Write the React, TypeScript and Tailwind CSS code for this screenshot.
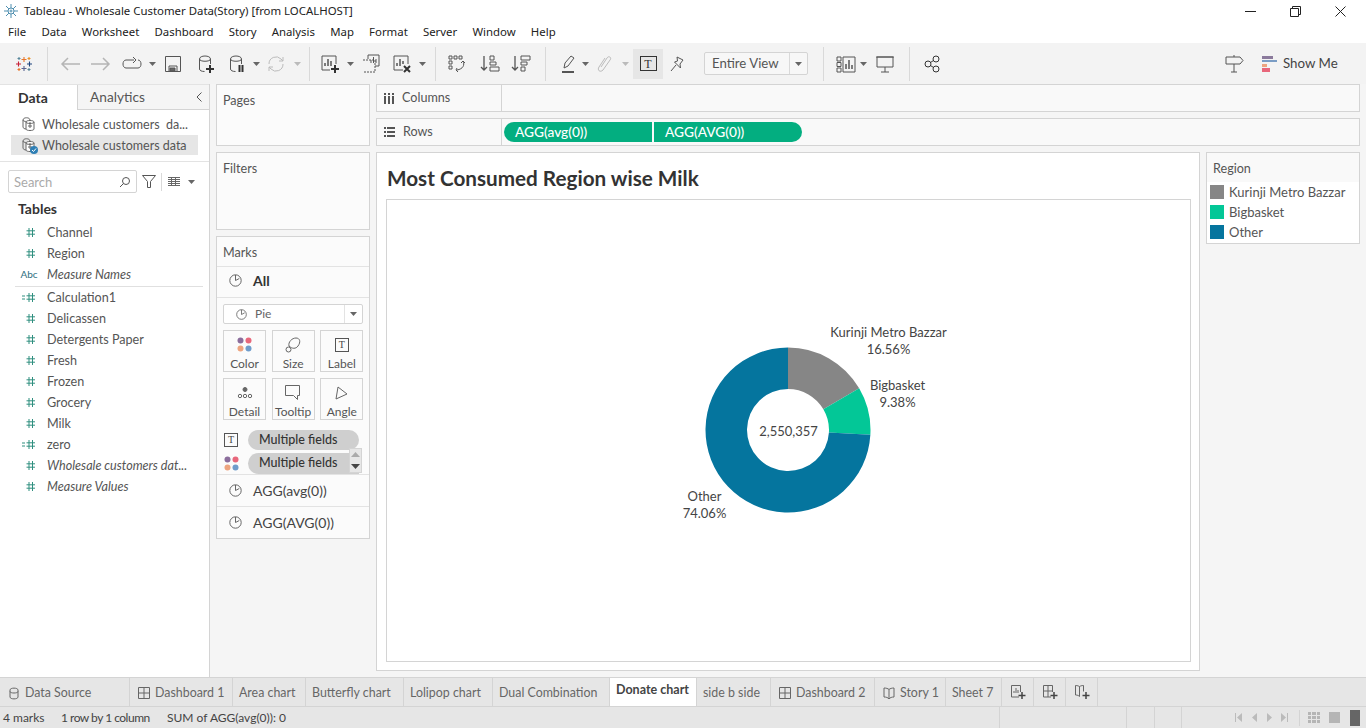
import React from "react";

const TAB = '"Lato", "Open Sans", sans-serif';
const WIN = '"Noto Sans", "Open Sans", sans-serif';

const sheetTabs = [
  { name: "Data Source", w: "w-[130px]", icon: "db" },
  { name: "Dashboard 1", w: "w-[103px]", icon: "dash" },
  { name: "Area chart", w: "w-[73px]" },
  { name: "Butterfly chart", w: "w-[98px]" },
  { name: "Lolipop chart", w: "w-[89px]" },
  { name: "Dual Combination", w: "w-[117px]" },
  { name: "Donate chart", w: "w-[87px]", active: true },
  { name: "side b side", w: "w-[74px]" },
  { name: "Dashboard 2", w: "w-[104px]", icon: "dash" },
  { name: "Story 1", w: "w-[71px]", icon: "story" },
  { name: "Sheet 7", w: "w-[56px]" },
];

const fieldsTop = [
  { name: "Channel" },
  { name: "Region" },
  { name: "Measure Names", abc: true },
];

const fieldsBottom = [
  { name: "Calculation1", calc: true },
  { name: "Delicassen" },
  { name: "Detergents Paper" },
  { name: "Fresh" },
  { name: "Frozen" },
  { name: "Grocery" },
  { name: "Milk" },
  { name: "zero", calc: true },
  { name: "Wholesale customers dat...", italic: true },
  { name: "Measure Values", italic: true },
];

function Caret({ className = "", color = "#666" }: { className?: string; color?: string }) {
  return (
    <div className={`flex items-center justify-center shrink-0 ${className}`}>
      <svg width="7" height="4" viewBox="0 0 7 4">
        <path d="M0 0h7L3.5 4z" fill={color} />
      </svg>
    </div>
  );
}

function Slot({ className = "", children }: { className?: string; children?: React.ReactNode }) {
  return <div className={`flex items-center justify-center shrink-0 h-full ${className}`}>{children}</div>;
}

function Sep() {
  return <div className="w-px h-[34px] bg-[#d9d9d9] shrink-0" />;
}

function Ico({ children, w = 20, h = 20, stroke = "#555" }: { children: React.ReactNode; w?: number; h?: number; stroke?: string }) {
  return (
    <svg width={w} height={h} viewBox={`0 0 ${w} ${h}`} fill="none" stroke={stroke} strokeWidth="1">
      {children}
    </svg>
  );
}

function Plus({ x, y }: { x: number; y: number }) {
  return <path d={`M${x - 4} ${y}h8M${x} ${y - 4}v8`} stroke="#333" strokeWidth="2" />;
}

function Cyl() {
  return <path d="M3.5 5c0-4 11-4 11 0v5M3.5 5c0 3 11 3 11 0M3.5 5v10c0 1.5 2 2.5 5 2.5" />;
}

function Logo({ size = 18 }: { size?: number }) {
  const bars = [
    ["M9 2v5M6.5 4.5h5", "#e8762b"],
    ["M9 11v5M6.5 13.5h5", "#5b6591"],
    ["M3.5 6.5v5M1 9h5", "#c72037"],
    ["M14.5 6.5v5M12 9h5", "#1f457e"],
    ["M4 2v3M2.5 3.5h3", "#59879b"],
    ["M14 2v3M12.5 3.5h3", "#eb9129"],
    ["M4 13v3M2.5 14.5h3", "#e8762b"],
    ["M14 13v3M12.5 14.5h3", "#5b879b"],
  ];
  return (
    <svg width={size} height={size} viewBox="0 0 18 18" fill="none" strokeWidth="1.1">
      {bars.map(([d, c]) => (
        <path key={d} d={d} stroke={c} />
      ))}
    </svg>
  );
}

function WinLogo() {
  const arms = ["M8 1v14", "M1 8h14", "M3 3l10 10", "M13 3L3 13"];
  return (
    <svg width="16" height="16" viewBox="0 0 16 16" fill="none" stroke="#4f8fb0" strokeWidth="1">
      {arms.map((d) => (
        <path key={d} d={d} />
      ))}
      <circle cx="8" cy="8" r="3" fill="#fff" />
      <path d="M8 6.500v3M6.500 8h3" />
    </svg>
  );
}

function PieIcon({ size = 13 }: { size?: number }) {
  return (
    <svg width={size} height={size} viewBox="0 0 13 13" fill="none" stroke="#666">
      <circle cx="6.5" cy="6.5" r="5.7" />
      <path d="M6.5 1v5.5l3.8-2" />
    </svg>
  );
}

function Dots() {
  return (
    <svg width="15" height="15" viewBox="0 0 15 15">
      <circle cx="3.5" cy="3.5" r="3" fill="#8b6d9c" />
      <circle cx="11.5" cy="3.5" r="3" fill="#e8677b" />
      <circle cx="3.5" cy="11.5" r="3" fill="#eda47f" />
      <circle cx="11.5" cy="11.5" r="3" fill="#6f9ccb" />
    </svg>
  );
}

function TBox({ size = 14 }: { size?: number }) {
  return (
    <div
      className="flex items-center justify-center border border-[#555] text-[10px] leading-none text-[#444]"
      style={{ width: size, height: size, fontFamily: '"Liberation Serif", serif' }}
    >
      T
    </div>
  );
}

function FieldIcon({ calc, abc }: { calc?: boolean; abc?: boolean }) {
  if (abc) return <span className="text-[10px] text-[#2f6f7f]">Abc</span>;
  return (
    <svg width="16" height="11" viewBox="0 0 16 11" fill="none" stroke="#2f8f7f">
      {calc && <path d="M1 4h3M1 7h3" />}
      <path d="M8 1v9M11.5 1v9M5.5 3.8h8.5M5.5 7.2h8.5" />
    </svg>
  );
}

function Field({ name, calc, abc, italic }: { name: string; calc?: boolean; abc?: boolean; italic?: boolean }) {
  return (
    <div className="flex items-center h-[21px] shrink-0">
      <div className="w-[47px] pl-[17px] pr-[6px] flex justify-center shrink-0">
        <FieldIcon calc={calc} abc={abc} />
      </div>
      <span className={`translate-y-px text-[12.6px] text-[#555] whitespace-nowrap ${abc || italic ? "italic" : ""}`}>{name}</span>
    </div>
  );
}

function DsIcon({ check }: { check?: boolean }) {
  return (
    <svg width="18" height="18" viewBox="0 0 18 18" fill="none" stroke="#666">
      <path d="M3 5c0-3 7-3 7 0v3M3 5c0 2 7 2 7 0M3 5v7c0 1 1.500 2 3 2" />
      <path d="M6 7c0-2 8-2 8 0v7c0 2-8 2-8 0zM6 7c0 2 8 2 8 0" fill="#fff" />
      <path d="M8 11h4M10 9v4" />
      {check && <circle cx="14" cy="14" r="4" fill="#2f7fb5" stroke="none" />}
      {check && <path d="M12 14l1.500 1.500 2.500-3" stroke="#fff" />}
    </svg>
  );
}

function MarkBtn({ label, children }: { label: string; children: React.ReactNode }) {
  return (
    <div className="flex flex-col items-center justify-between w-[43px] h-[42px] border border-[#d4d4d4] pt-[5px] bg-[#fbfbfb]">
      <div className="h-[17px] flex items-center justify-center">{children}</div>
      <span className="text-[12px] leading-[15px] text-[#555] whitespace-nowrap">{label}</span>
    </div>
  );
}

function slice(start: number, end: number) {
  const c = 83;
  const R = 82.5;
  const r = 41;
  const pt = (rad: number, pct: number) => {
    const a = (pct / 100) * 2 * Math.PI;
    return `${(c + rad * Math.sin(a)).toFixed(2)} ${(c - rad * Math.cos(a)).toFixed(2)}`;
  };
  const large = end - start > 50 ? 1 : 0;
  return `M${pt(R, start)}A${R} ${R} 0 ${large} 1 ${pt(R, end)}L${pt(r, end)}A${r} ${r} 0 ${large} 0 ${pt(r, start)}Z`;
}

function Donut() {
  return (
    <div className="relative w-[166px] h-[166px] text-[13px] leading-[17px] text-[#444] text-center">
      <svg width="166" height="166" viewBox="0 0 166 166">
        <path d={slice(0, 16.56)} fill="#868686" />
        <path d={slice(16.56, 25.94)} fill="#03c797" />
        <path d={slice(25.94, 100)} fill="#05759e" />
      </svg>
      <div className="absolute inset-0 pt-[3px] pl-[2px] flex items-center justify-center">2,550,357</div>
      <div className="absolute left-[116px] top-[-23px] w-[136px]">
        Kurinji Metro Bazzar
        <br />
        16.56%
      </div>
      <div className="absolute left-[163px] top-[30px] w-[60px]">
        Bigbasket
        <br />
        9.38%
      </div>
      <div className="absolute left-[-30px] top-[141px] w-[60px]">
        Other
        <br />
        74.06%
      </div>
    </div>
  );
}

function TabIcon({ kind }: { kind: string }) {
  if (kind === "db")
    return (
      <svg width="12" height="13" viewBox="0 0 12 13" fill="none" stroke="#666">
        <path d="M2 3c0-2.500 8-2.500 8 0v7c0 2.500-8 2.500-8 0zM2 4.500c0 2 8 2 8 0" />
      </svg>
    );
  if (kind === "dash")
    return (
      <svg width="12" height="12" viewBox="0 0 12 12" fill="none" stroke="#666">
        <path d="M.5.5h11v11H.5zM.5 6h11M6 .5v11" />
      </svg>
    );
  return (
    <svg width="12" height="13" viewBox="0 0 12 13" fill="none" stroke="#666">
      <path d="M1 1c2 0 4 .5 5 1.500C7 1.500 9 1 11 1v9c-2 0-4 .5-5 2-1-1.500-3-2-5-2zM6 2.500V12" />
    </svg>
  );
}

export default function App() {
  return (
    <div className="w-[1366px] h-[728px] flex flex-col overflow-hidden bg-white" style={{ fontFamily: TAB }}>
      {/* window title */}
      <div className="h-[21px] flex items-center shrink-0 relative" style={{ fontFamily: WIN }}>
        <div className="w-[24px] pl-[3px] shrink-0">
          <WinLogo />
        </div>
        <span className="text-[11.4px] text-[#222]">Tableau - Wholesale Customer Data(Story) [from LOCALHOST]</span>
        <div className="ml-auto flex items-center gap-[34px] pr-[20px] pt-[2px]">
          <svg width="11" height="11" viewBox="0 0 11 11" stroke="#222" fill="none">
            <path d="M0 5.500h11" />
          </svg>
          <svg width="11" height="11" viewBox="0 0 11 11" stroke="#222" fill="none">
            <path d="M.5 2.500h8v8h-8zM2.500 2.500v-2h8v8h-2" />
          </svg>
          <svg width="11" height="11" viewBox="0 0 11 11" stroke="#222" fill="none">
            <path d="M.5.5l10 10M10.500.5l-10 10" />
          </svg>
        </div>
      </div>

      {/* menu */}
      <div className="h-[22px] flex items-center gap-[15.2px] pl-[8px] text-[11.4px] text-[#222] shrink-0" style={{ fontFamily: WIN }}>
        {["File", "Data", "Worksheet", "Dashboard", "Story", "Analysis", "Map", "Format", "Server", "Window", "Help"].map((m) => (
          <span key={m}>{m}</span>
        ))}
      </div>

      {/* toolbar */}
      <div className="h-[41px] flex items-center bg-[#f3f3f3] shrink-0">
        <Slot className="w-[47px]">
          <Logo />
        </Slot>
        <Sep />
        <Slot className="w-[32px] ml-[6px]">
          <Ico w={20} h={14} stroke="#b5b5b5">
            <path d="M20 7H2M8 1L2 7l6 6" strokeWidth="1.500" />
          </Ico>
        </Slot>
        <Slot className="w-[30px]">
          <Ico w={20} h={14} stroke="#b5b5b5">
            <path d="M0 7h18M12 1l6 6-6 6" strokeWidth="1.500" />
          </Ico>
        </Slot>
        <Slot className="w-[32px]">
          <Ico w={20} h={14}>
            <path d="M12 3H4C0 3 0 11 4 11h12c4 0 4-8 0-8" />
            <path d="M11 0l3 3-3 3" />
          </Ico>
        </Slot>
        <Caret className="w-[8px]" />
        <Slot className="w-[34px]">
          <Ico w={16} h={16}>
            <path d="M.5.5h15v15H.5zM4 15.500V10h8v5.500" />
            <path d="M5 12h5v3H5z" fill="#666" />
          </Ico>
        </Slot>
        <Slot className="w-[32px]">
          <Ico>
            <Cyl />
            <Plus x={14} y={15} />
          </Ico>
        </Slot>
        <Slot className="w-[30px]">
          <Ico>
            <Cyl />
            <path d="M12.500 11v7M15.500 11v7" stroke="#333" strokeWidth="2" />
          </Ico>
        </Slot>
        <Caret className="w-[8px]" />
        <Slot className="w-[32px]">
          <Ico w={18} h={16} stroke="#bbb">
            <path d="M2 8a7 7 0 0 1 12-5l2 2M16 8a7 7 0 0 1-12 5l-2-2M16 1v4h-4M2 15v-4h4" />
          </Ico>
        </Slot>
        <Caret className="w-[10px] mr-[7px]" color="#bbb" />
        <Sep />
        <Slot className="w-[32px] ml-[4px]">
          <Ico>
            <path d="M10 16H2V2h14v8" />
            <path d="M5 12V9M8 12V5M11 12V7" strokeWidth="1.500" />
            <Plus x={15} y={15} />
          </Ico>
        </Slot>
        <Caret className="w-[8px]" />
        <Slot className="w-[34px]">
          <Ico>
            <path d="M7 5V1h11v11h-4" />
            <path d="M2 6h12v12H2" strokeDasharray="2 1" />
            <path d="M10 9V6M12.500 9V3M15 9V5" />
          </Ico>
        </Slot>
        <Slot className="w-[28px]">
          <Ico>
            <path d="M11 16H2V2h14v8" />
            <path d="M5 12V9M8 12V5M11 10V7" strokeWidth="1.500" />
            <path d="M12 12l6 6M18 12l-6 6" stroke="#333" strokeWidth="2" />
          </Ico>
        </Slot>
        <Caret className="w-[12px] mr-[7px]" />
        <Sep />
        <Slot className="w-[42px]">
          <Ico>
            <path d="M2 2h3v3H2zM7 2h3v3H7zM12 2h3v3h-3zM2 7h3v3H2zM2 12h3v3H2z" />
            <path d="M16 7c2 4 0 8-6 9M10 14l-1 2 2 2M14 9l2-2 2 2" />
          </Ico>
        </Slot>
        <Slot className="w-[24px]">
          <Ico>
            <path d="M4 2v14M1 13l3 3 3-3" strokeWidth="1.300" />
            <path d="M10 2h4v4h-4zM10 8h6v3h-6zM10 13h9v4h-9z" />
          </Ico>
        </Slot>
        <Slot className="w-[38px]">
          <Ico>
            <path d="M4 2v14M1 13l3 3 3-3" strokeWidth="1.300" />
            <path d="M10 2h9v4h-9zM10 8h6v3h-6zM10 13h4v4h-4z" />
          </Ico>
        </Slot>
        <div className="w-[5px] shrink-0" />
        <Sep />
        <Slot className="w-[24px] ml-[10px]">
          <Ico>
            <path d="M6 14l1-5 6-7 3 2-6 8z" />
            <path d="M4 18h12" strokeWidth="2" />
          </Ico>
        </Slot>
        <Caret className="w-[10px]" />
        <Slot className="w-[28px]">
          <Ico stroke="#bbb">
            <path d="M7 13l6-9c2-3 5 0 3 2l-7 10c-3 3-6 0-4-3l6-9" />
          </Ico>
        </Slot>
        <Caret className="w-[14px] mr-px" color="#bbb" />
        <Slot className="w-[30px] !h-[30px] bg-[#e6e6e6]">
          <div className="w-[17px] h-[15px] border border-[#333] flex items-center justify-center text-[12px] leading-none text-[#333]" style={{ fontFamily: '"Liberation Serif", serif' }}>
            T
          </div>
        </Slot>
        <Slot className="w-[28px]">
          <Ico w={16} h={16}>
            <path d="M8 1l6 3-3 4 .5 4-6-6 3-1zM7 9l-5 6" />
          </Ico>
        </Slot>
        <div className="ml-[13px] w-[104px] h-[23px] flex items-center border border-[#d4d4d4] rounded-[2px] bg-[#f7f7f7] shrink-0">
          <span className="flex-1 pl-[7px] text-[13.2px] text-[#555] whitespace-nowrap">Entire View</span>
          <div className="w-[18px] h-full border-l border-[#d9d9d9] flex items-center justify-center">
            <Caret />
          </div>
        </div>
        <div className="w-[15px] shrink-0" />
        <Sep />
        <Slot className="w-[24px] ml-[10px]">
          <Ico>
            <path d="M1 3h4v4H1zM1 8.500h4v4H1zM1 14h4v4H1zM7 3h12v15H7z" />
            <path d="M10 15v-5M13 15V6M16 15v-4" strokeWidth="1.500" />
          </Ico>
        </Slot>
        <Caret className="w-[10px]" />
        <Slot className="w-[34px]">
          <Ico>
            <path d="M2 3h16v10H2zM1 3h18M10 13v5M6 18h8" />
          </Ico>
        </Slot>
        <div className="w-[7px] shrink-0" />
        <Sep />
        <Slot className="w-[44px]">
          <Ico w={16} h={18} stroke="#333">
            <circle cx="4" cy="9" r="3" />
            <circle cx="12" cy="4" r="3" />
            <circle cx="12" cy="14" r="3" />
            <path d="M6.500 7.500l3-2M6.500 10.500l3 2" />
          </Ico>
        </Slot>
        <div className="flex-1" />
        <Slot className="w-[34px] mr-[10px]">
          <Ico>
            <path d="M1 3h14l3 3.500-3 3.500H1zM9 3V1M9 10v8M6 18h6" />
          </Ico>
        </Slot>
        <div className="w-[76px] mr-[28px] h-full flex items-center shrink-0">
          <svg width="15" height="16" viewBox="0 0 15 16" className="shrink-0">
            <path d="M0 0h11v3H0z" fill="#8b7a9c" />
            <path d="M0 4h15v2H0z" fill="#7a9cc4" />
            <path d="M0 8h5v3H0z" fill="#eda47f" />
            <path d="M0 12h8v4H0z" fill="#e8677b" />
          </svg>
          <span className="ml-[6px] text-[13.3px] text-[#444] whitespace-nowrap">Show Me</span>
        </div>
      </div>

      {/* main area */}
      <div className="h-[593px] shrink-0 flex bg-[#f5f5f5]">
        {/* data pane */}
        <div className="w-[210px] shrink-0 bg-white border-r border-[#d4d4d4] flex flex-col">
          <div className="h-[26px] flex shrink-0 border-t border-[#e3e3e3]">
            <div className="w-[77px] pl-[18px] flex items-center text-[14px] font-bold text-[#333]">Data</div>
            <div className="flex-1 flex items-center justify-between pl-[12px] pr-[7px] bg-[#f5f5f5] border-l border-b border-[#d4d4d4] text-[13.7px] text-[#555]">
              <span>Analytics</span>
              <svg width="6" height="10" viewBox="0 0 6 10" fill="none" stroke="#555">
                <path d="M5.500.5L1 5l4.500 4.500" />
              </svg>
            </div>
          </div>
          <div className="pt-[4px] pl-[11px] pr-[11px] pb-[6px] border-b border-[#e3e3e3] text-[12.5px] text-[#555] shrink-0">
            <div className="h-[20px] flex items-center pl-[9px] gap-[4px]">
              <DsIcon />
              <span className="translate-y-px whitespace-nowrap">Wholesale customers&nbsp; da...</span>
            </div>
            <div className="h-[20px] flex items-center pl-[9px] gap-[4px] bg-[#e6e6e6] mt-px">
              <DsIcon check />
              <span className="translate-y-px whitespace-nowrap">Wholesale customers data</span>
            </div>
          </div>
          <div className="flex items-center pt-[8px] pl-[8px] shrink-0">
            <div className="w-[129px] h-[23px] flex items-center justify-between px-[5px] border border-[#d4d4d4] rounded-[2px]">
              <span className="translate-y-px text-[13px] text-[#aaa]">Search</span>
              <svg width="12" height="12" viewBox="0 0 12 12" fill="none" stroke="#555">
                <circle cx="7" cy="5" r="3.500" />
                <path d="M4.500 7.500L1 11" />
              </svg>
            </div>
            <svg width="14" height="13" viewBox="0 0 14 13" fill="none" stroke="#555" className="ml-[5px]">
              <path d="M.5.5h13L8.500 6.500v6h-3v-6z" />
            </svg>
            <div className="w-px h-[18px] bg-[#d9d9d9] ml-[5px]" />
            <svg width="12" height="9" viewBox="0 0 12 9" fill="none" stroke="#666" className="ml-[6px]">
              <path d="M0 .5h12M0 2.500h12M0 4.500h12M0 6.500h12M0 8.500h12M3.500 0v9M7.500 0v9" />
            </svg>
            <Caret className="ml-[8px]" />
          </div>
          <div className="h-[29px] pl-[18px] pt-[2px] flex items-center text-[14px] font-bold text-[#333] shrink-0">Tables</div>
          {fieldsTop.map((f) => (
            <Field key={f.name} {...f} />
          ))}
          <div className="h-px bg-[#e0e0e0] mt-px ml-[15px] mr-[6px] shrink-0" />
          {fieldsBottom.map((f) => (
            <Field key={f.name} {...f} />
          ))}
        </div>

        {/* cards */}
        <div className="w-[154px] ml-[6px] shrink-0 flex flex-col gap-[6px]">
          <div className="h-[62px] bg-[#fbfbfb] border border-[#d4d4d4] pl-[6px] pt-[7px] text-[12.6px] text-[#555]">Pages</div>
          <div className="h-[78px] bg-[#fbfbfb] border border-[#d4d4d4] pl-[6px] pt-[7px] text-[12.6px] text-[#555]">Filters</div>
          <div className="h-[303px] bg-[#fbfbfb] border border-[#d4d4d4] flex flex-col">
            <div className="h-[30px] border-b border-[#e3e3e3] pl-[6px] pt-[4px] flex items-center text-[12.6px] text-[#555] shrink-0">Marks</div>
            <div className="h-[31px] border-b border-[#e3e3e3] pb-[3px] flex items-center shrink-0">
              <div className="w-[36px] flex justify-center">
                <PieIcon />
              </div>
              <span className="text-[14px] font-bold text-[#333]">All</span>
            </div>
            <div className="px-[6px] pt-[6px] shrink-0">
              <div className="h-[20px] flex items-center border border-[#d4d4d4] rounded-[2px] bg-white">
                <div className="flex-1 pl-[12px] flex items-center gap-[8px] text-[12px] text-[#666]">
                  <PieIcon size={11} />
                  Pie
                </div>
                <div className="w-[18px] h-full border-l border-[#e3e3e3] flex items-center justify-center">
                  <Caret />
                </div>
              </div>
              <div className="grid grid-cols-3 gap-x-[6px] gap-y-[6px] mt-[6px]">
                <MarkBtn label="Color">
                  <Dots />
                </MarkBtn>
                <MarkBtn label="Size">
                  <Ico w={16} h={16} stroke="#666">
                    <path d="M4 9C3 5 7 1 11 1s5 4 2 8c-2 3-6 3-9 0z" />
                    <circle cx="3.500" cy="12.500" r="2.500" fill="#fbfbfb" />
                  </Ico>
                </MarkBtn>
                <MarkBtn label="Label">
                  <TBox size={14} />
                </MarkBtn>
                <MarkBtn label="Detail">
                  <Ico w={16} h={12} stroke="#666">
                    <circle cx="8" cy="2.500" r="2" fill="#666" />
                    <circle cx="3" cy="9" r="1.700" />
                    <circle cx="8" cy="9" r="1.700" />
                    <circle cx="13" cy="9" r="1.700" />
                  </Ico>
                </MarkBtn>
                <MarkBtn label="Tooltip">
                  <Ico w={16} h={15} stroke="#666">
                    <path d="M.5.5h14v10h-2v4l-4-4H.5z" />
                  </Ico>
                </MarkBtn>
                <MarkBtn label="Angle">
                  <Ico w={14} h={14} stroke="#666">
                    <path d="M3 1l9 7-11 5z" />
                  </Ico>
                </MarkBtn>
              </div>
            </div>
            <div className="flex-1 relative pt-[10px] pl-[6px]">
              <div className="flex items-center h-[20px]">
                <div className="w-[25px] flex justify-start pl-px">
                  <TBox size={14} />
                </div>
                <div className="w-[111px] h-[20px] rounded-full bg-[#cfcfcf] pl-[11px] flex items-center text-[12.5px] text-[#333] font-medium">Multiple fields</div>
              </div>
              <div className="flex items-center h-[21px] mt-[3px]">
                <div className="w-[25px] flex justify-start pl-[1px]">
                  <Dots />
                </div>
                <div className="w-[111px] h-[21px] rounded-l-full bg-[#cfcfcf] pl-[11px] flex items-center text-[12.5px] text-[#333] font-medium">Multiple fields</div>
              </div>
              <div className="absolute left-[132px] top-[28px] w-[13px] h-[25px] bg-[#e6e6e6] border border-[#d4d4d4] flex flex-col items-center justify-between py-[3px]">
                <svg width="9" height="5" viewBox="0 0 9 5">
                  <path d="M4.500 0L9 5H0z" fill="#aaa" />
                </svg>
                <svg width="9" height="5" viewBox="0 0 9 5">
                  <path d="M0 0h9L4.500 5z" fill="#444" />
                </svg>
              </div>
            </div>
            {["AGG(avg(0))", "AGG(AVG(0))"].map((t) => (
              <div key={t} className="h-[32px] border-t border-[#e3e3e3] flex items-center shrink-0 text-[14px] text-[#444]">
                <div className="w-[36px] flex justify-center">
                  <PieIcon />
                </div>
                {t}
              </div>
            ))}
          </div>
        </div>

        {/* shelves + view */}
        <div className="w-[984px] ml-[6px] shrink-0 flex flex-col gap-[6px]">
          <div className="h-[28px] flex bg-[#f9f9f9] border border-[#d4d4d4] shrink-0">
            <div className="w-[125px] border-r border-[#d4d4d4] flex items-center pl-[7px] gap-[8px] text-[12.6px] text-[#555]">
              <svg width="10" height="11" viewBox="0 0 10 11" fill="#555">
                <path d="M0 3h2v8H0zM4 3h2v8H4zM8 3h2v8H8zM0 0h2v2H0zM4 0h2v2H4zM8 0h2v2H8z" />
              </svg>
              Columns
            </div>
          </div>
          <div className="h-[28px] flex bg-[#f9f9f9] border border-[#d4d4d4] shrink-0">
            <div className="w-[125px] border-r border-[#d4d4d4] flex items-center pl-[7px] gap-[8px] text-[12.6px] text-[#555]">
              <svg width="11" height="10" viewBox="0 0 11 10" fill="#555">
                <path d="M3 0h8v2H3zM3 4h8v2H3zM3 8h8v2H3zM0 0h2v2H0zM0 4h2v2H0zM0 8h2v2H0z" />
              </svg>
              Rows
            </div>
            <div className="flex items-center pl-[2px] gap-[2px] text-[13.7px] text-white font-medium">
              <div className="w-[148px] h-[20px] rounded-l-full bg-[#03ae80] pl-[11px] flex items-center">AGG(avg(0))</div>
              <div className="w-[148px] h-[20px] rounded-r-full bg-[#03ae80] pl-[11px] flex items-center">AGG(AVG(0))</div>
            </div>
          </div>
          <div className="h-[519px] flex gap-[6px] shrink-0">
            <div className="w-[824px] bg-white border border-[#d4d4d4] pl-[9px] pr-[8px] pb-[8px] flex flex-col shrink-0">
              <div className="h-[46px] pl-px pt-[6px] flex items-center text-[20.7px] font-bold text-[#333] whitespace-nowrap shrink-0">Most Consumed Region wise Milk</div>
              <div className="flex-1 border border-[#d4d4d4] pr-[2px] pb-[2px] flex items-center justify-center">
                <Donut />
              </div>
            </div>
            <div className="w-[154px] h-[92px] bg-white border border-[#d4d4d4] shrink-0">
              <div className="h-[29px] bg-[#f9f9f9] pl-[6px] pt-[3px] flex items-center text-[12.6px] text-[#555]">Region</div>
              <div className="pl-[3px] pt-[3px] flex flex-col gap-[6px] text-[13px] text-[#555]">
                <div className="flex items-center gap-[5px] h-[14px]">
                  <div className="w-[14px] h-[14px] bg-[#868686]" />
                  <span className="translate-y-px">Kurinji Metro Bazzar</span>
                </div>
                <div className="flex items-center gap-[5px] h-[14px]">
                  <div className="w-[14px] h-[14px] bg-[#03c797]" />
                  <span className="translate-y-px">Bigbasket</span>
                </div>
                <div className="flex items-center gap-[5px] h-[14px]">
                  <div className="w-[14px] h-[14px] bg-[#05759e]" />
                  <span className="translate-y-px">Other</span>
                </div>
              </div>
            </div>
          </div>
        </div>
      </div>

      {/* sheet tabs */}
      <div className="h-[30px] flex bg-[#e6e6e6] border-t border-b border-[#d4d4d4] shrink-0">
        {sheetTabs.map((t) => (
          <div
            key={t.name}
            className={`${t.w} shrink-0 flex items-center border-r border-[#d4d4d4] whitespace-nowrap ${t.icon ? "pl-[8px]" : "pl-[6px]"} gap-[5px] ${
              t.active ? "bg-white font-bold text-[#444] text-[12.5px] pb-[3px]" : "text-[#666] text-[12.4px] pt-[2px]"
            }`}
          >
            {t.icon && <TabIcon kind={t.icon} />}
            {t.name}
          </div>
        ))}
        {["sheet", "dash", "story"].map((k) => (
          <div key={k} className="w-[32px] shrink-0 flex items-center justify-center border-r border-[#d4d4d4]">
            <svg width="16" height="16" viewBox="0 0 16 16" fill="none" stroke="#666">
              {k === "sheet" && <path d="M9 13H1.500V1.500h9V8M4 9V7M6 9V4M8 9V6" />}
              {k === "dash" && <path d="M9 13H1.500V1.500h9V8M1.500 7h9M6 1.500V13" />}
              {k === "story" && <path d="M1.500 1.500c2 0 3 .5 4 1 1-.5 2-1 4-1v6M1.500 1.500V11c2 0 3 .5 4 1.500M5.500 2.500v10" />}
              <path d="M12 8v7M8.500 11.500h7" stroke="#444" strokeWidth="1.500" />
            </svg>
          </div>
        ))}
      </div>

      {/* status bar */}
      <div className="h-[21px] shrink-0 flex items-center bg-[#e6e6e6] text-[12px] text-[#444]">
        <span className="pl-[3px] w-[61px] whitespace-nowrap">4 marks</span>
        <span className="w-[106px] whitespace-nowrap tracking-[-0.5px]">1 row by 1 column</span>
        <span className="whitespace-nowrap">SUM of AGG(avg(0)): 0</span>
        <div className="ml-auto flex h-full items-center">
          <div className="w-[127px] h-full border-l border-[#d4d4d4]" />
          <div className="w-[28px] h-full border-l border-[#d4d4d4]" />
          <div className="w-[27px] h-full border-l border-[#d4d4d4]" />
          <div className="w-[185px] h-full border-l border-[#d4d4d4] flex items-center justify-end pr-[6px]">
            <svg width="53" height="9" viewBox="0 0 53 9" fill="#bbb">
              <path d="M0 0h1v9H0zM7 0v9L2 4.500zM22 0v9l-5-4.500zM32 0l5 4.500L32 9zM46 0l5 4.500L46 9zM52 0h1v9h-1z" />
            </svg>
            <div className="w-px h-[16px] bg-[#d4d4d4] ml-[11px]" />
            <div className="grid grid-cols-3 gap-px w-[12px] ml-[8px]">
              {Array.from({ length: 9 }).map((_, i) => (
                <div key={i} className="h-[3px] bg-[#b5b5b5]" />
              ))}
            </div>
            <div className="w-[11px] h-[11px] bg-[#b5b5b5] ml-[9px]" />
            <div className="w-[10px] h-[16px] bg-[#666] ml-[10px]" />
          </div>
        </div>
      </div>
    </div>
  );
}
